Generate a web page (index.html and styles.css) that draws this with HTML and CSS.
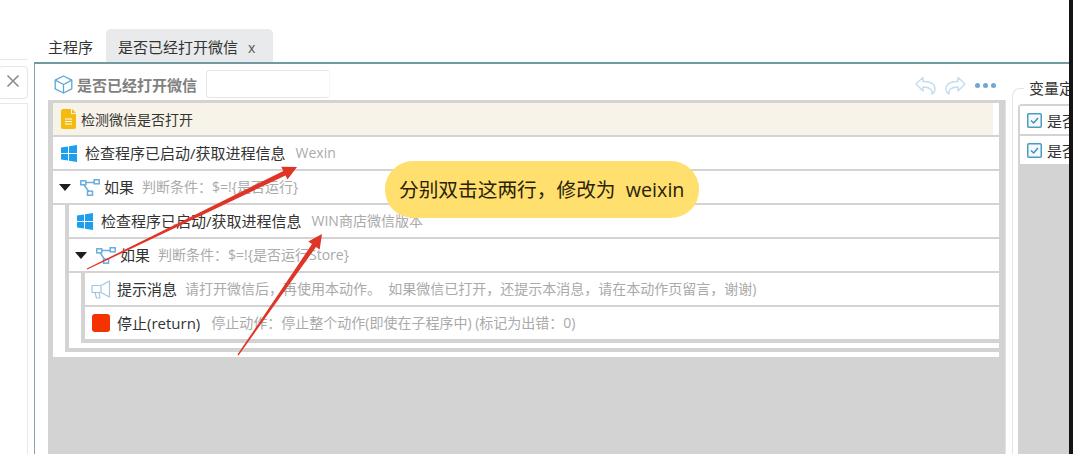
FILE: index.html
```html
<!DOCTYPE html>
<html lang="zh">
<head>
<meta charset="utf-8">
<title>是否已经打开微信</title>
<link rel="stylesheet" href="styles.css">
</head>
<body>
<svg class="defs" width="0" height="0" aria-hidden="true">
  <defs>
    <symbol id="win" viewBox="0 0 16 17"><path d="M0 2.6 7 1.5V8H0ZM8 1.3 16 0V8H8ZM0 9H7V15.5L0 14.4ZM8 9H16V17L8 15.7Z" fill="#1d9fee"/></symbol>
    <symbol id="branch" viewBox="0 0 20 17"><g fill="none" stroke="#6aaedb" stroke-width="1.5"><rect x=".8" y="1.8" width="5" height="4"/><rect x="14.2" y=".8" width="5" height="4"/><rect x="7.5" y="12.2" width="5" height="4"/><path d="M5.8 3.6H14.2M4 5.8 8.6 12.2"/></g></symbol>
  </defs>
</svg>
<div class="app">
  <div class="work">
    <aside class="side">
      <div class="side-close"><svg width="14" height="14" viewBox="0 0 14 14"><path d="M1.5 1.5 12.5 12.5M12.5 1.5 1.5 12.5" stroke="#8c8c8c" stroke-width="1.6" fill="none"/></svg></div>
      <div class="side-list"></div>
    </aside>
    <div class="stage">
      <nav class="tabs">
        <div class="tab">主程序</div>
        <div class="tab tab-active">是否已经打开微信<span class="tab-x">x</span></div>
      </nav>
      <section class="panel">
        <div class="editor">
          <header class="head">
            <svg class="cube" width="19" height="19" viewBox="0 0 19 19"><g fill="none" stroke="#5ea6d8" stroke-width="1.3" stroke-linejoin="round"><path d="M9.5 1 17.8 5.2V13.8L9.5 18 1.2 13.8V5.2Z"/><path d="M1.2 5.2 9.5 9.5 17.8 5.2M9.5 9.5V18"/></g></svg>
            <span class="title">是否已经打开微信</span>
            <div class="name-input"></div>
            <div class="tools">
              <svg width="21" height="19" viewBox="0 0 21 19"><path d="M1 8 8 1.5V5.5C15 5 20 8 20 13 20 15 19 17 17 18 18 14 15 11 8 11V15Z" fill="none" stroke="#c3dcef" stroke-width="1.4" stroke-linejoin="round"/></svg>
              <svg class="tool-redo" width="21" height="19" viewBox="0 0 21 19"><path d="M20 8 13 1.5V5.5C6 5 1 8 1 13 1 15 2 17 4 18 3 14 6 11 13 11V15Z" fill="none" stroke="#c3dcef" stroke-width="1.4" stroke-linejoin="round"/></svg>
              <div class="dots"><i></i><i></i><i></i></div>
            </div>
          </header>
          <div class="canvas">
            <div class="tree">
              <div class="row row-note">
                <svg class="ic-note" width="15" height="20" viewBox="0 0 15 20"><path d="M2 0H10V5H15V18A2 2 0 0 1 13 20H2A2 2 0 0 1 0 18V2A2 2 0 0 1 2 0ZM11 0 15 4H11Z" fill="#f3ba10"/><path d="M4 10H11M4 12.5H11M4 15H11" stroke="#fff" stroke-width="1"/></svg>
                <span class="label">检测微信是否打开</span>
              </div>
              <div class="row">
                <svg class="ic-win" width="16" height="17"><use href="#win"/></svg>
                <span class="label">检查程序已启动/获取进程信息</span><span class="desc desc-wide">Wexin</span>
              </div>
              <div class="row">
                <span class="caret"></span>
                <svg class="ic-branch" width="20" height="17"><use href="#branch"/></svg>
                <span class="label">如果</span><span class="desc">判断条件：$=!{是否运行}</span>
              </div>
              <div class="nest">
                <div class="tree tree-inner">
                  <div class="row">
                    <svg class="ic-win" width="16" height="17"><use href="#win"/></svg>
                    <span class="label">检查程序已启动/获取进程信息</span><span class="desc desc-wide">WIN商店微信版本</span>
                  </div>
                  <div class="row">
                    <span class="caret"></span>
                    <svg class="ic-branch" width="20" height="17"><use href="#branch"/></svg>
                    <span class="label">如果</span><span class="desc">判断条件：$=!{是否运行Store}</span>
                  </div>
                  <div class="nest">
                    <div class="tree tree-inner">
                      <div class="row">
                        <svg class="ic-horn" width="20" height="19" viewBox="0 0 20 19"><g fill="none" stroke="#a4c6e2" stroke-width="1.2" stroke-linejoin="round"><path d="M1 5.5H10L18.5 1V17L10 12.5H1Z"/><path d="M10 5.5V12.5M4 12.5 5.5 18H9L8 12.5"/></g></svg>
                        <span class="label">提示消息</span><span class="desc">请打开微信后，再使用本动作。&nbsp; 如果微信已打开，还提示本消息，请在本动作页留言，谢谢)</span>
                      </div>
                      <div class="row">
                        <span class="ic-stop"></span>
                        <span class="label">停止(return)</span><span class="desc desc-stop">停止动作：停止整个动作(即使在子程序中) (标记为出错：0)</span>
                      </div>
                    </div>
                  </div>
                </div>
              </div>
            </div>
          </div>
        </div>
        <aside class="vars">
          <fieldset class="var-box">
            <legend class="var-legend">变量定义</legend>
            <div class="var-list">
              <div class="var-row"><svg width="15" height="15" viewBox="0 0 15 15"><rect x=".75" y=".75" width="13.5" height="13.5" rx="1" fill="#f4fafd" stroke="#4a9cc0" stroke-width="1.5"/><path d="M4 7.5 6.7 10 11 5" fill="none" stroke="#3f93bb" stroke-width="1.5"/></svg><span>是否运行</span></div>
              <div class="var-row"><svg width="15" height="15" viewBox="0 0 15 15"><rect x=".75" y=".75" width="13.5" height="13.5" rx="1" fill="#f4fafd" stroke="#4a9cc0" stroke-width="1.5"/><path d="M4 7.5 6.7 10 11 5" fill="none" stroke="#3f93bb" stroke-width="1.5"/></svg><span>是否运行Store</span></div>
            </div>
          </fieldset>
        </aside>
      </section>
    </div>
  </div>
  <div class="edge"></div>
  <svg class="arrows" width="1073" height="454" viewBox="0 0 1073 454" aria-hidden="true">
    <polygon points="297,167 287.5,179.4 285.5,175.4 87.2,269.6 86.8,268.5 283.3,170.9 281.3,166.8" fill="#df3426"/>
    <polygon points="322,234 319.7,249.5 316,246.9 238.5,355.4 237.5,354.6 312,244.1 308.3,241.5" fill="#df3426"/>
  </svg>
  <div class="callout">分别双击这两行，修改为&nbsp; weixin</div>
</div>
</body>
</html>
```

FILE: styles.css
```css
* { box-sizing: border-box; }
html, body { margin: 0; height: 100%; background: #fff; overflow: hidden; }
body { font-family: "Open Sans", "Noto Sans CJK SC", sans-serif; color: #333; }
.defs { position: absolute; }

.app { position: relative; display: flex; width: 1073px; height: 454px; overflow: hidden; }
.work { flex: 1; display: flex; min-width: 0; }
.edge { width: 4px; background: #141414; }

.side { width: 34px; flex: none; padding: 59px 6px 0 0; display: flex; flex-direction: column; }
.side-close { position: relative; height: 38px; border-top: 1px solid #e8e8e8; }
.side-close svg { display: block; margin: 14px 0 0 6px; }
.side-close::after { content: ""; position: absolute; left: -2px; right: 0; top: 6px; height: 31px; border: 1px solid #e6e6e6; border-radius: 4px; }
.side-list { flex: 1; margin-top: 6px; border-top: 1px solid #e8e8e8; border-right: 1px solid #e8e8e8; }

.stage { flex: 1; min-width: 0; display: flex; flex-direction: column; }
.tabs { height: 62px; padding-left: 6px; display: flex; align-items: flex-end; }
.tab { height: 33px; padding: 8px 13px 0 8px; font-size: 15px; line-height: 20px; color: #333; }
.tab-active { width: 167px; padding-left: 12px; background: #e8eaeb; border-radius: 5px 5px 0 0; }
.tab-x { margin-left: 10px; font-size: 14px; color: #555; }

.panel { flex: 1; min-height: 0; display: flex; border-top: 2px solid #6f9ca1; border-left: 1px solid #7fa4aa; }
.editor { width: 971px; flex: none; display: flex; flex-direction: column; }
.head { height: 36px; flex: none; padding: 0 10px 0 19px; display: flex; align-items: center; }
.cube { margin-top: 5px; }
.title { margin: 5px 0 0 4px; font-size: 15px; font-weight: 700; color: #808080; }
.name-input { width: 124px; height: 28px; margin: 4px 0 0 9px; border: 1px solid #e4e4e4; border-right-color: #f6f6f6; border-radius: 4px; }
.tools { margin: 6px 0 0 auto; display: flex; align-items: center; }
.tool-redo { margin-left: 9px; }
.dots { margin-left: 9px; display: flex; gap: 3px; }
.dots i { width: 5px; height: 5px; border-radius: 50%; background: #6fa7d8; }

.canvas { flex: 1; margin-left: 13px; padding: 3px 6px 0 5px; background: #d3d3d3; border-right: 1px solid #e2e2e2; }
.tree { display: flex; flex-direction: column; gap: 2px; background: #d3d3d3; }
.tree-inner { border-left: 4px solid #d3d3d3; border-bottom: 4px solid #d3d3d3; }
.nest { padding: 0 0 5px 12px; background: #fff; }
.row { height: 32px; flex: none; padding-left: 8px; display: flex; align-items: center; background: #fff; white-space: nowrap; }
.row-note { background: #f7f3e8; border-right: 6px solid #fff; }
.label { margin-bottom: 2px; font-size: 15px; color: #333; }
.row-note .label { margin: 0 0 0 5px; font-size: 14px; }
.desc { margin: 0 0 2px 8px; font-size: 14px; color: #aaa; }
.desc-wide { margin-left: 10px; }
.desc-stop { margin-left: 11px; }
.ic-win { margin-right: 8px; }
.caret { width: 0; height: 0; margin: 1px 9px 0 -2px; border: 6.5px solid transparent; border-top: 7px solid #1e1e1e; border-bottom: 0; }
.ic-branch { margin-right: 4px; }
.ic-horn { margin: 0 6px 0 -2px; }
.ic-stop { width: 18px; height: 18px; margin: 0 7px 0 -1px; border-radius: 3px; background: #f53300; }

.vars { flex: 1; min-width: 0; margin-left: 6px; padding-top: 14px; display: flex; }
.var-box { flex: 1; min-width: 0; margin: 0; padding: 6px 0 0 5px; border: 0; border-left: 1px solid #e4e4e4; border-top: 1px solid #e4e4e4; border-radius: 8px 0 0 0; display: flex; flex-direction: column; overflow: hidden; }
.var-legend { margin-left: 6px; padding: 0 5px; font-size: 15px; line-height: 20px; color: #333; white-space: nowrap; }
.var-list { flex: 1; padding: 2px 0 0 2px; display: flex; flex-direction: column; gap: 2px; background: #d3d3d3; border-radius: 4px 0 0 0; }
.var-row { height: 28px; padding-left: 7px; display: flex; align-items: center; gap: 5px; background: #fff; font-size: 15px; color: #333; white-space: nowrap; }
.var-row svg { flex: none; }

.arrows { position: absolute; left: 0; top: 0; pointer-events: none; }
.callout { position: absolute; left: 385px; top: 161px; width: 314px; height: 57px; padding-left: 14px; border-radius: 28px; background: #ffdf6e; font-size: 19.7px; line-height: 57px; color: #2a2208; white-space: nowrap; }
```
